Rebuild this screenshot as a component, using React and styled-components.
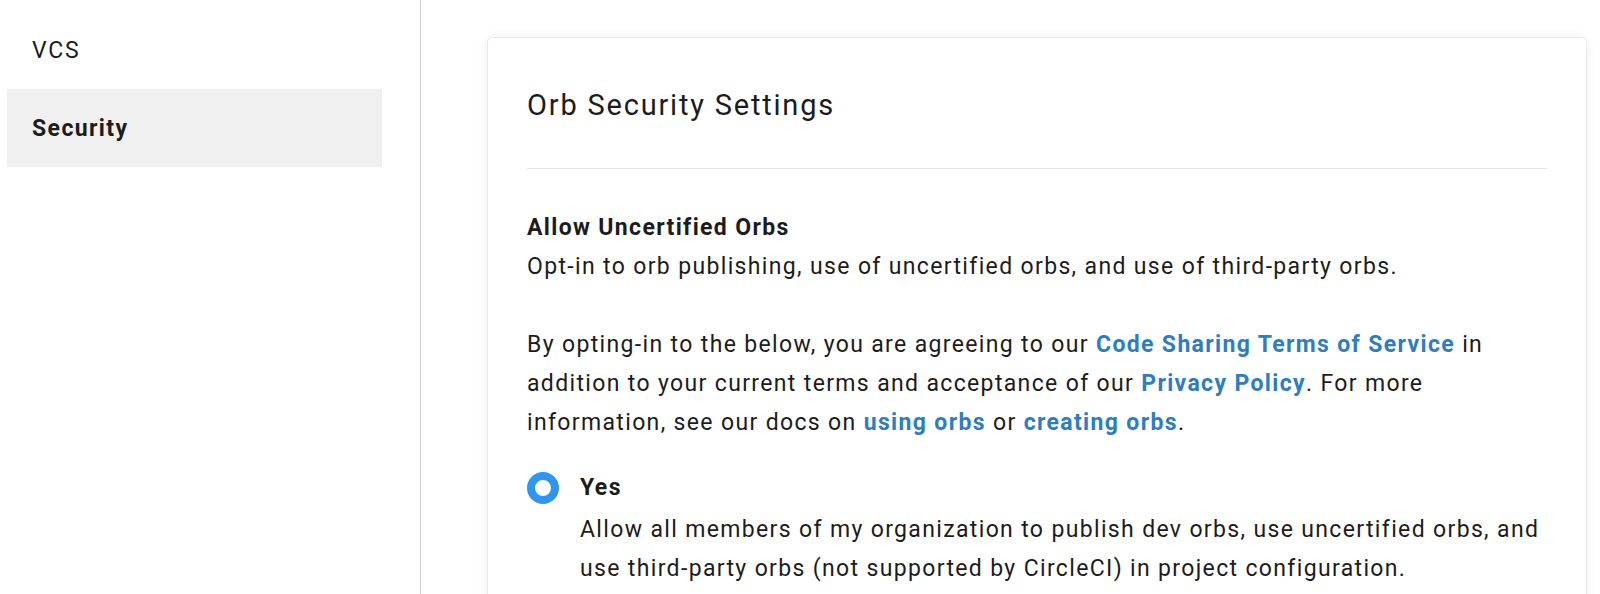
import React, { useState } from 'react';
import styled, { createGlobalStyle } from 'styled-components';

const GlobalStyle = createGlobalStyle`
  html, body {
    margin: 0;
    padding: 0;
    background: #fff;
    font-family: Roboto, "Liberation Sans", Arial, sans-serif;
    color: #1c1c1c;
  }
`;

const Layout = styled.div`
  display: flex;
  min-height: 594px;
`;

const Sidebar = styled.nav`
  width: 420px;
  flex-shrink: 0;
  border-right: 1px solid #d6d6d6;
  padding-top: 11px;
`;

const NavItem = styled.div`
  margin-left: 7px;
  width: 375px;
  height: 78px;
  display: flex;
  align-items: center;
  padding-left: 25px;
  box-sizing: border-box;
  font-size: 23px;
  letter-spacing: ${props => (props.active ? 1.4 : 1.8)}px;
  font-weight: ${props => (props.active ? 700 : 400)};
  background: ${props => (props.active ? '#f0f0f0' : 'transparent')};
  cursor: pointer;
`;

const Main = styled.main`
  flex: 1;
  padding: 37px 13px 0 66px;
`;

const Card = styled.section`
  background: #fff;
  border: 1px solid #e9e9e9;
  border-radius: 5px;
  box-shadow: 0 0 14px rgba(0, 0, 0, 0.06);
  padding: 50px 39px 40px 39px;
`;

const Title = styled.h2`
  margin: 0;
  font-size: 29px;
  letter-spacing: 1.8px;
  font-weight: 400;
  line-height: 34px;
`;

const Divider = styled.hr`
  border: none;
  border-top: 1px solid #e4e4e4;
  margin: 46px 0 39px;
`;

const Text = styled.p`
  margin: 0 0 ${props => props.gap || 0}px;
  font-size: 23px;
  letter-spacing: 1.35px;
  line-height: 39px;
`;

const Heading = styled.strong`
  display: block;
  font-weight: 700;
`;

const Link = styled.a`
  color: #2d7dbf;
  font-weight: 700;
  text-decoration: none;
`;

const Option = styled.label`
  display: flex;
  gap: 21px;
  margin-top: ${props => props.top || 0}px;
  cursor: pointer;
`;

const Radio = styled.span`
  width: 32px;
  height: 32px;
  flex-shrink: 0;
  border-radius: 50%;
  box-sizing: border-box;
  border: ${props => (props.checked ? '8px solid #2f95ed' : '2px solid #9a9a9a')};
  background: #fff;
  margin-top: 4px;
`;

const OptionBody = styled.div`
  font-size: 23px;
  letter-spacing: 1.35px;
  line-height: 39px;
`;

const OptionLabel = styled.div`
  font-weight: 700;
  margin-bottom: 3px;
`;

export default function App() {
  const [section, setSection] = useState('security');
  const [allow, setAllow] = useState('yes');

  return (
    <>
      <GlobalStyle />
      <Layout>
        <Sidebar>
          <NavItem active={section === 'vcs'} onClick={() => setSection('vcs')}>VCS</NavItem>
          <NavItem active={section === 'security'} onClick={() => setSection('security')}>Security</NavItem>
        </Sidebar>
        <Main>
          <Card>
            <Title>Orb Security Settings</Title>
            <Divider />
            <Text gap={39}>
              <Heading>Allow Uncertified Orbs</Heading>
              Opt-in to orb publishing, use of uncertified orbs, and use of third-party orbs.
            </Text>
            <Text>
              By opting-in to the below, you are agreeing to our <Link href="#">Code Sharing Terms of Service</Link> in
              addition to your current terms and acceptance of our <Link href="#">Privacy Policy</Link>. For more
              information, see our docs on <Link href="#">using orbs</Link> or <Link href="#">creating orbs</Link>.
            </Text>
            <Option top={26} onClick={() => setAllow('yes')}>
              <Radio checked={allow === 'yes'} />
              <OptionBody>
                <OptionLabel>Yes</OptionLabel>
                Allow all members of my organization to publish dev orbs, use uncertified orbs, and
                use third-party orbs (not supported by CircleCI) in project configuration.
              </OptionBody>
            </Option>
          </Card>
        </Main>
      </Layout>
    </>
  );
}
